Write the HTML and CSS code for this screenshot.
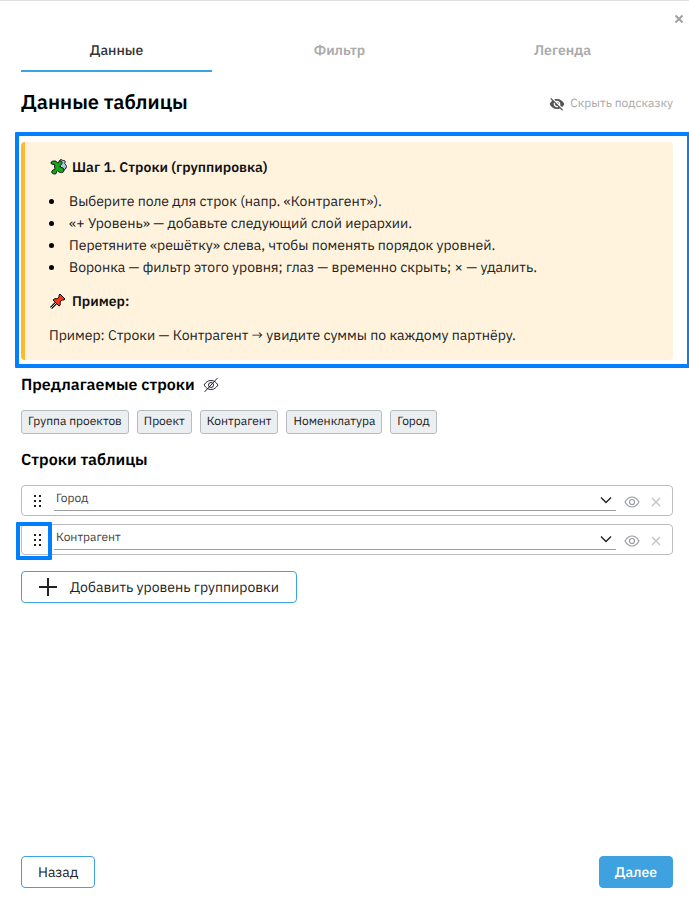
FILE: index.html
```html
<!DOCTYPE html>
<html lang="ru">
<head>
    <meta charset="UTF-8">
    <meta name="viewport" content="width=device-width, initial-scale=1.0">
    <title>Данные таблицы</title>
    <link rel="stylesheet" href="styles.css">
</head>
<body>
    <svg class="sprite" aria-hidden="true">
        <symbol id="eye" viewBox="0 0 16 16">
            <path d="M1 8C3 4.600 5.300 3 8 3s5 1.600 7 5c-2 3.400-4.300 5-7 5S3 11.400 1 8z" stroke-width="1.2"/>
            <circle cx="8" cy="8" r="2.500" stroke-width="1.2"/>
        </symbol>
        <symbol id="cross" viewBox="0 0 10 10">
            <path d="M1 1l8 8M9 1L1 9" stroke-width="1.4"/>
        </symbol>
        <symbol id="chevron" viewBox="0 0 12 8">
            <path d="M1 1.500l5 5 5-5" stroke-width="1.4"/>
        </symbol>
        <symbol id="grip" viewBox="0 0 8 12">
            <path d="M0 0h2v2H0zM5 0h2v2H5zM0 5h2v2H0zM5 5h2v2H5zM0 10h2v2H0zM5 10h2v2H5z"/>
        </symbol>
    </svg>

    <div class="panel">
        <header class="panel-header">
            <button class="close" type="button" aria-label="Закрыть">
                <svg viewBox="0 0 10 10"><path d="M1.500 1.500l7 7M8.500 1.500l-7 7"/></svg>
            </button>
        </header>

        <nav class="tabs">
            <button class="tab active" type="button">Данные</button>
            <button class="tab" type="button">Фильтр</button>
            <button class="tab" type="button">Легенда</button>
        </nav>

        <main>
            <div class="title-row">
                <h1>Данные таблицы</h1>
                <button class="hide-hint" type="button">
                    <svg viewBox="0 0 24 24"><path d="M12 7c2.760 0 5 2.240 5 5 0 .650-.130 1.260-.360 1.830l2.920 2.920c1.510-1.260 2.700-2.890 3.430-4.750-1.730-4.390-6-7.500-11-7.500-1.400 0-2.740.250-3.980.700l2.160 2.160C10.740 7.130 11.350 7 12 7zM2 4.270l2.740 2.740C3.080 8.300 1.780 10.020 1 12c1.730 4.390 6 7.500 11 7.500 1.550 0 3.030-.300 4.380-.840L19.730 22 21 20.730 3.270 3 2 4.270zM7.530 9.800l1.550 1.550c-.050.210-.080.430-.080.650 0 1.660 1.340 3 3 3 .220 0 .440-.030.650-.080l1.550 1.550c-.670.330-1.410.530-2.200.530-2.760 0-5-2.240-5-5 0-.790.200-1.530.530-2.200zM11.840 9.020l3.150 3.150.020-.160c0-1.660-1.340-3-3-3z"/></svg>
                    Скрыть подсказку
                </button>
            </div>

            <section class="hint">
                <h3>
                    <svg viewBox="0 0 18 18">
                        <path d="M10 4c0-2 2-3 3-2s2 0 3 1-1 2 0 3 2 2 1 4-2 2-3 1l-4-4z" fill="#a9cbe0" stroke="#111"/>
                        <path d="M6 7C5 6 2 7 2 5s2-2 4-2 2 2 3 2 1-3 3-2 1 3 0 4-2 1-1 2 4 0 4 3-3 3-5 2-1-2-2-1 0 3-2 3-4-1-3-3 3-1 3-2-1-3 0-4z" fill="#16a51b" stroke="#111"/>
                    </svg>
                    Шаг 1. Строки (группировка)
                </h3>
                <ul>
                    <li>Выберите поле для строк (напр. «Контрагент»).</li>
                    <li>«+ Уровень» — добавьте следующий слой иерархии.</li>
                    <li>Перетяните «решётку» слева, чтобы поменять порядок уровней.</li>
                    <li>Воронка — фильтр этого уровня; глаз — временно скрыть; × — удалить.</li>
                </ul>
                <h3>
                    <svg viewBox="0 0 18 18">
                        <path d="M7 11l-5 5" stroke="#111" stroke-width="3"/>
                        <path d="M7 11l-5 5" stroke="#ccc"/>
                        <path d="M11 2l5 5-1 1-2 0-2 2c1 2 0 4-1 4L4 8c1-1 3-2 4-1l2-2V3z" fill="#f03a17" stroke="#111"/>
                    </svg>
                    Пример:
                </h3>
                <p>Пример: Строки — Контрагент → увидите суммы по каждому партнёру.</p>
            </section>

            <h2>
                Предлагаемые строки
                <svg viewBox="0 0 16 16"><path d="M1 8C3 5 5 3.500 8 3.500S13 5 15 8c-2 3-4 4.500-7 4.500S3 11 1 8zM1.500 15L14.500 1"/><circle cx="8" cy="8" r="2.500"/></svg>
            </h2>
            <div class="chips">
                <button type="button">Группа проектов</button>
                <button type="button">Проект</button>
                <button type="button">Контрагент</button>
                <button type="button">Номенклатура</button>
                <button type="button">Город</button>
            </div>

            <h2>Строки таблицы</h2>
            <div class="levels">
                <div class="level">
                    <span class="grip"><svg><use href="#grip"/></svg></span>
                    <div class="field">
                        <select aria-label="Уровень 1">
                            <option>Город</option>
                            <option>Контрагент</option>
                        </select>
                        <svg><use href="#chevron"/></svg>
                    </div>
                    <button class="icon eye" type="button" aria-label="Скрыть"><svg><use href="#eye"/></svg></button>
                    <button class="icon remove" type="button" aria-label="Удалить"><svg><use href="#cross"/></svg></button>
                </div>
                <div class="level">
                    <span class="grip marked"><svg><use href="#grip"/></svg></span>
                    <div class="field">
                        <select aria-label="Уровень 2">
                            <option>Контрагент</option>
                            <option>Город</option>
                        </select>
                        <svg><use href="#chevron"/></svg>
                    </div>
                    <button class="icon eye" type="button" aria-label="Скрыть"><svg><use href="#eye"/></svg></button>
                    <button class="icon remove" type="button" aria-label="Удалить"><svg><use href="#cross"/></svg></button>
                </div>
            </div>

            <button class="btn add" type="button">
                <svg viewBox="0 0 18 18"><path d="M9 0v18M0 9h18"/></svg>
                Добавить уровень группировки
            </button>
        </main>

        <footer>
            <button class="btn" type="button">Назад</button>
            <button class="btn primary" type="button">Далее</button>
        </footer>
    </div>
</body>
</html>
```
FILE: styles.css
```css
* { box-sizing: border-box; }
body {
    margin: 0;
    overflow-x: hidden;
    background: #fff;
    color: #212121;
    font-family: "IBM Plex Sans", "Noto Sans", sans-serif;
    font-size: 14px;
    line-height: 22px;
    text-rendering: geometricPrecision;
}
button, select { font: inherit; color: inherit; text-rendering: inherit; }
button { padding: 0; border: 0; background: none; cursor: pointer; }
h1, h2, h3, p, ul { margin: 0; }
svg { flex: none; fill: none; stroke: currentColor; }
.sprite { position: absolute; width: 0; height: 0; }

.panel {
    display: flex;
    flex-direction: column;
    min-height: 100vh;
    padding: 0 16px 20px 21px;
    border-top: 1px solid #e0e0e0;
    overflow: hidden;
}
.panel-header { display: flex; justify-content: flex-end; margin-right: -16px; padding: 8px 0 7px; }
.close { display: flex; align-items: center; justify-content: center; width: 20px; height: 20px; color: #a0a0a0; }
.close svg { width: 10px; height: 10px; stroke-width: 2; }

.tabs { display: grid; grid-template-columns: repeat(3, 1fr); gap: 32px; margin-right: 15px; }
.tab {
    padding: 4px 0 10px;
    border-bottom: 2px solid transparent;
    color: #aaa;
    font-weight: 600;
    line-height: 20px;
}
.tab.active { border-color: #3fa2e0; color: #333; font-weight: 500; }

main { flex: 1; }
.title-row { display: flex; align-items: flex-end; justify-content: space-between; margin: 16px 0 26px; }
h1 { color: #000; font-size: 20px; font-weight: 600; line-height: 28px; }
.hide-hint { display: flex; align-items: center; gap: 5px; color: #a8a8a8; font-size: 12px; line-height: 24px; }
.hide-hint svg { width: 16px; height: 16px; fill: #555; stroke: none; }

.hint {
    position: relative;
    display: grid;
    gap: 12px;
    margin-bottom: 13px;
    padding: 14px 24px;
    border-left: 4px solid #ffb92e;
    border-radius: 4px;
    background: #fff3de;
}
.hint::after {
    content: "";
    position: absolute;
    inset: -10px -18px -8px -10px;
    border: 4px solid #0080ff;
    border-radius: 1px;
    pointer-events: none;
}
.hint h3 { display: flex; align-items: center; gap: 5px; color: #111; font-size: 14px; font-weight: 600; }
.hint h3 svg { width: 18px; height: 18px; }
.hint ul { padding-left: 16px; }
.hint li { padding-left: 4px; }
.hint li::marker { color: #000; }

h2 { display: flex; align-items: center; gap: 8px; margin-bottom: 13px; color: #000; font-size: 16px; font-weight: 600; line-height: 24px; }
h2 svg { width: 16px; height: 16px; color: #2a2a3a; }
.chips { display: flex; flex-wrap: wrap; gap: 8px; margin-bottom: 14px; }
.chips button {
    height: 24px;
    padding: 0 6px;
    border: 1px solid #b8bcc0;
    border-radius: 3px;
    background: #eceff1;
    font-size: 12px;
    line-height: 20px;
}

.levels { display: grid; gap: 8px; margin-bottom: 16px; }
.level { display: flex; align-items: center; height: 31px; padding-right: 8px; border: 1px solid #bdbdbd; border-radius: 4px; }
.grip { position: relative; display: flex; align-items: center; justify-content: center; width: 32px; height: 100%; cursor: grab; }
.grip svg { width: 8px; height: 12px; fill: #222; stroke: none; }
.marked::after {
    content: "";
    position: absolute;
    inset: -3px 2px -6px -6px;
    border: 4px solid #0080ff;
    border-radius: 1px;
}
.field { display: flex; flex: 1; align-items: center; height: 20px; margin-right: 8px; border-bottom: 1px solid #9e9e9e; }
.field select {
    flex: 1;
    height: 20px;
    margin-right: -16px;
    padding: 0 18px 2px 2px;
    border: 0;
    background: none;
    appearance: none;
    color: #444;
    font-size: 12px;
    line-height: 16px;
}
.field > svg { width: 12px; height: 8px; margin-right: 4px; color: #222; pointer-events: none; }
.icon { display: flex; align-items: center; justify-content: center; width: 16px; height: 16px; margin-top: 2px; }
.icon svg { width: 16px; height: 16px; }
.eye { margin-right: 8px; color: #9a9ca5; }
.remove { color: #c4c4c4; }
.remove svg { width: 10px; height: 10px; }

.btn { height: 32px; padding: 0 16px; border: 1px solid #3fa2e0; border-radius: 4px; background: #fff; }
.btn.primary { padding: 0 15px; background: #3fa2e0; color: #fff; font-weight: 500; }
.btn.add { display: flex; align-items: center; gap: 13px; padding: 0 17px; }
.btn.add svg { width: 18px; height: 18px; color: #222; stroke-width: 2; }

footer { display: flex; justify-content: space-between; }
```
